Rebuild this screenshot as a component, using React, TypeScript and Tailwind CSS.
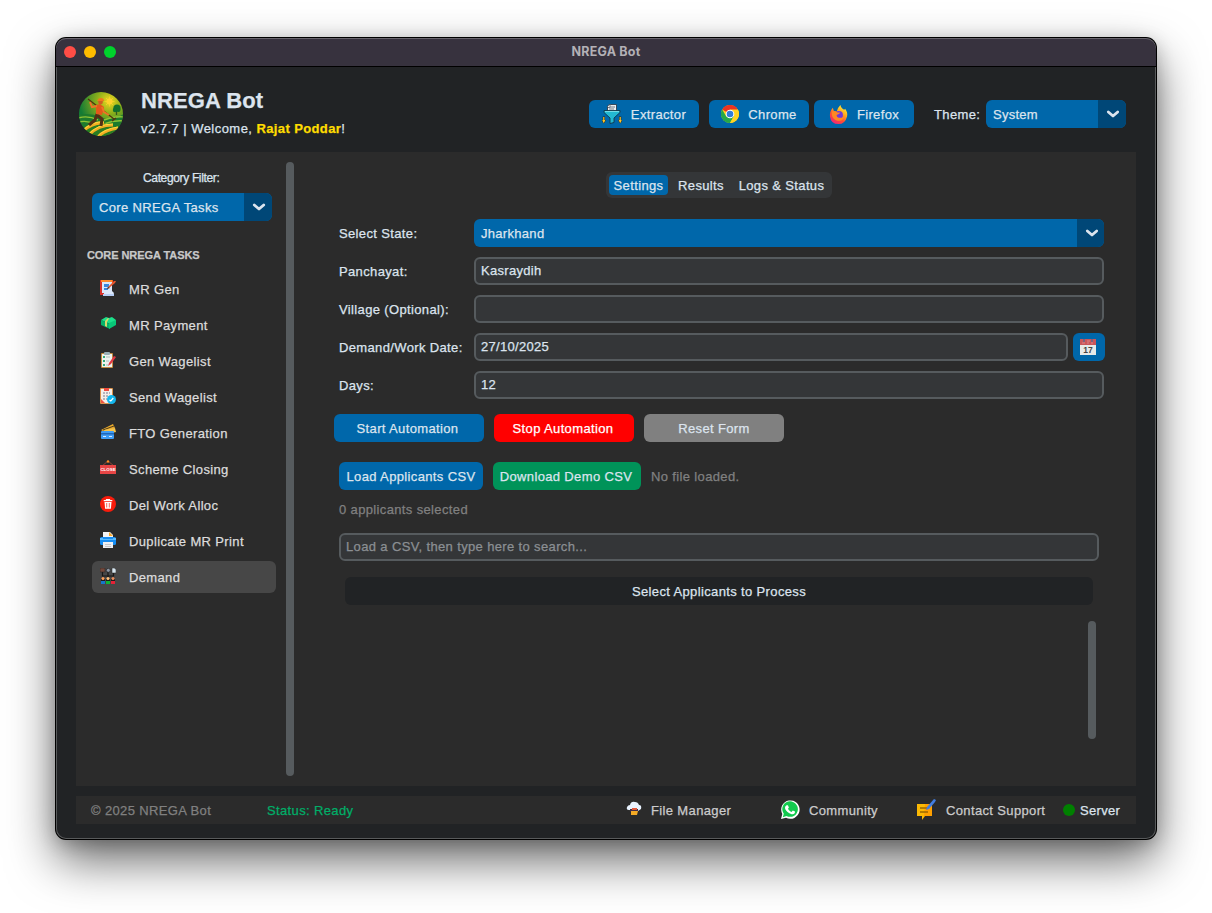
import React from 'react';

function Chevron() {
  return (
    <svg className="ml-0.5" width="14" height="10" viewBox="0 0 14 10" fill="none" stroke="#dce4ee" strokeWidth="2.8" strokeLinecap="round" strokeLinejoin="round">
      <path d="M2.3 3L7 7l4.7-4" />
    </svg>
  );
}

function Select({ label, className, arrow, tracking }: { label: string; className: string; arrow: string; tracking: string }) {
  return (
    <div className={`flex h-7 shrink-0 overflow-hidden rounded-md bg-[#0067aa] ${className}`}>
      <span className={`flex-1 pl-[7px] leading-[29px] ${tracking}`}>{label}</span>
      <span className={`flex items-center justify-center bg-[#004777] ${arrow}`}>
        <Chevron />
      </span>
    </div>
  );
}

const I = {
  gen: (
    <>
      <path d="M0 0h13v3L4 15H0z" fill="#f4511e" />
      <path d="M0 0h4v15H0z" fill="#d6302a" /><path d="M1 0h11v2H1z" fill="#ff8a2b" />
      <path d="M2 2h10v9l2 2-1 3H4V13H2z" fill="#dbe7fa" />
      <path d="M4 4h5v3H4zM4 8h4v2H4z" fill="#3b87dd" /><path d="M3 14h11v2H3z" fill="#b6cdf5" />
      <path d="M7 9l1-2 6-6 2 0-1 2-6 5z" fill="#e6552d" /><path d="M7 9l1-2 2 1z" fill="#333" />
    </>
  ),
  pay: (
    <>
      <path d="M1 4l5-3 3 1 3-1 4 3v1l-6 3z" fill="#1be08a" /><path d="M1 4l9 4v5L1 9z" fill="#06b46a" />
      <path d="M9 7l7-3v5l-7 4z" fill="#08c777" /><path d="M5 5l3-3 1 .5L7 6v5l-2-1z" fill="#d8d86c" />
    </>
  ),
  list: (
    <>
      <rect x="1" y="1" width="12" height="15" rx="1" fill="#c58b42" /><rect x="2" y="2" width="10" height="13" fill="#edf3ef" />
      <rect x="4" y="0" width="6" height="3" rx="1" fill="#9aafb5" />
      <path d="M3 4h2v2H3zM3 8h2v2H3zM3 12h2v2H3z" fill="#36a878" /><path d="M6 5h4M6 9h3M6 13h2" stroke="#aebdba" />
      <path d="M8 14l1-3 5-7 2 1-5 7z" fill="#df3944" />
    </>
  ),
  send: (
    <>
      <rect x="0" width="13" height="16" rx="1" fill="#d9924a" /><rect x="1" y="1" width="11" height="14" fill="#f5eee8" />
      <path d="M4 0h5v3H4z" fill="#ef4c3f" /><path d="M3 5h7M3 8h6M3 11h4" stroke="#777d91" strokeDasharray="2 1" />
      <path d="M1 11l4 4H1z" fill="#ee5342" /><circle cx="11.5" cy="11.5" r="4.5" fill="#12b6ee" />
      <path d="M9.5 12l1.3 1 2.5-3" fill="none" stroke="#fff" strokeWidth="1.2" />
    </>
  ),
  fto: (
    <>
      <path d="M1 6l12-6 2 4-9 5z" fill="#e7a92d" /><path d="M3 6l11-4" stroke="#4a3a1e" />
      <path d="M4 6l11-2 1 4-9 2z" fill="#f6c44c" /><rect x="1" y="7" width="13" height="8" rx="1" fill="#3e9cf5" />
      <path d="M1 9h13v1.5H1z" fill="#2166b6" /><path d="M3 12.5h3M9 12.5h3" stroke="#d2e8ff" />
    </>
  ),
  close: (
    <>
      <path d="M2 6l6-5 6 5" fill="none" stroke="#8d4436" /><circle cx="8" cy="1.5" r="1.2" fill="#ff8b23" />
      <rect y="5" width="16" height="9" fill="#e74545" />
      <text x="8" y="11.2" textAnchor="middle" fontFamily="Liberation Sans" fontWeight="bold" fontSize="4.4" fill="#fff">CLOSE</text>
    </>
  ),
  del: (
    <>
      <circle cx="8" cy="8" r="8" fill="#f81c0c" /><path d="M3.7 4.7h8.6M6.5 4.5v-1h3v1" fill="none" stroke="#fff" strokeWidth="1.2" />
      <path d="M4.5 6h7l-.6 6.8H5.1z" fill="#fff" /><path d="M6.7 7v4.5M9.3 7v4.5" stroke="#f81c0c" strokeWidth=".7" />
    </>
  ),
  print: (
    <>
      <path d="M3 0h7l3 3v4H3z" fill="#f3f4f5" /><path d="M9 0l4 4H9z" fill="#f6a62b" />
      <rect y="5" width="16" height="8" rx="1.5" fill="#168cf1" /><path d="M0 6h3v1h10V6h3v2H0z" fill="#57baff" />
      <path d="M3 10h10v6H3z" fill="#eef0f4" /><path d="M5 12.5h6M5 14.5h6" stroke="#c5c7cb" />
    </>
  ),
  demand: (
    <>
      <path d="M2.5 4v4h11V4M8 4v5" fill="none" stroke="#171717" strokeWidth="1.2" />
      <rect y="0" width="5" height="4" fill="#74483b" stroke="#222" strokeWidth=".5" /><circle cx="8.3" cy="2.3" r="2" fill="#8d98a6" stroke="#222" strokeWidth=".7" /><path d="M12 0h2.5L16 1.5V5h-4z" fill="#d7e6ef" stroke="#222" strokeWidth=".5" />
      <path d="M1 11h4v5H1zM6 11h4v5H6zM11 11h4v5h-4z" fill="#1b1b1b" />
      <circle cx="3" cy="10.5" r="1.5" fill="#ff9d56" /><circle cx="8" cy="10.5" r="1.5" fill="#ffc27b" /><circle cx="13" cy="10.5" r="1.5" fill="#e98a58" />
      <path d="M1 13h4v3H1z" fill="#1575ca" /><path d="M6 13h4v3H6z" fill="#10b333" /><path d="M11 13h4v3h-4z" fill="#e62136" />
    </>
  ),
};

const tasks = [
  { name: 'MR Gen', icon: I.gen },
  { name: 'MR Payment', icon: I.pay },
  { name: 'Gen Wagelist', icon: I.list },
  { name: 'Send Wagelist', icon: I.send },
  { name: 'FTO Generation', icon: I.fto },
  { name: 'Scheme Closing', icon: I.close },
  { name: 'Del Work Alloc', icon: I.del },
  { name: 'Duplicate MR Print', icon: I.print },
  { name: 'Demand', icon: I.demand },
];

function Logo() {
  return (
    <svg className="size-[46px]" viewBox="0 0 46 46">
      <defs>
        <radialGradient id="sky" cx=".68" cy=".22" r=".65"><stop stopColor="#f4d820" /><stop offset=".4" stopColor="#8fb01a" /><stop offset="1" stopColor="#137b35" /></radialGradient>
        <clipPath id="disc"><circle cx="23" cy="23" r="22" /></clipPath>
      </defs>
      <g clipPath="url(#disc)">
        <path d="M0 0h46v46H0z" fill="url(#sky)" />
        <circle cx="31.500" cy="10.500" r="3" fill="#ffd22b" />
        <path d="M31.500 5.500v10M26.500 10.500h10M28 7l7 7M35 7l-7 7" stroke="#ffd22b" strokeWidth=".7" />
        <path d="M0 24q12-3 22 2t24-3v23H0z" fill="#1d7a2d" />
        <path d="M0 27q10-3 20 2M26 29q10-4 20-3M0 31q10-2 16 2M26 33q10-4 20-3" fill="none" stroke="#8fc336" strokeWidth="1.4" />
        <path d="M3 40Q17 28 32 34q8 3 14-1v13H0z" fill="#2a7d22" />
        <path d="M5 40Q15 31 26 32M10 45Q19 34 35 34M20 46q6-7 20-9M31 46q5-4 13-6" fill="none" stroke="#f2ae22" strokeWidth="3.2" />
        <path d="M5 39Q15 30 26 31M10 44Q19 33 35 33M20 45q6-7 20-9" fill="none" stroke="#ffd93c" strokeWidth="1" />
      </g>
      <path d="M38.500 17v7" stroke="#315521" strokeWidth="1.3" /><circle cx="39" cy="17" r="3.600" fill="#14702b" /><circle cx="37" cy="19" r="2.200" fill="#14702b" /><circle cx="40.500" cy="19" r="2" fill="#14702b" />
      <path d="M10 8l26 20m-2 2l4-3" stroke="#54300f" strokeWidth="1.2" fill="none" />
      <path d="M19 23l-2 6-6 5m8-10l5 4-1 7" fill="none" stroke="#523015" strokeWidth="3" strokeLinejoin="round" />
      <path d="M18 14l4-1 4 3-2 8-6-1z" fill="#e2581a" /><path d="M19 15l-5 1-2-5m12 5l2 5 5 3" fill="none" stroke="#ed7326" strokeWidth="2" />
      <circle cx="22.500" cy="11" r="2.400" fill="#ce5e25" /><path d="M19 10q1-3 4-3t3 3z" fill="#ee791e" />
    </svg>
  );
}

const ExtractorIcon = () => (
  <svg className="h-5 w-5" viewBox="0 0 20 20">
    <path d="M7 .5h7.500v8h-9V2.500z" fill="#edf0f2" stroke="#27313d" strokeWidth=".8" /><path d="M8 .5v3H6M7 5h5M8 3h5" fill="none" stroke="#727c88" />
    <path d="M2 6.500h16v2L12 14v4.500l-4 1V14L2 8.500z" fill="#22b8d2" stroke="#123648" strokeWidth=".9" /><path d="M3 7.500h14" stroke="#72dbe7" />
    <path d="M1.800 12.500v6M18.200 12.500v6" stroke="#302b1a" strokeWidth="2.200" /><path d="M-.5 16l2.300 3.500L4 16M16 16l2.200 3.500L20.500 16" fill="#302b1a" />
    <path d="M1.800 13v5m-1-2l1 2 1-2M18.200 13v5m-1-2l1 2 1-2" fill="none" stroke="#ffc629" strokeWidth="1.200" />
  </svg>
);

const ChromeIcon = () => (
  <svg className="h-[18px] w-[18px]" viewBox="0 0 20 20">
    <circle cx="10" cy="10" r="10" fill="#ffd321" />
    <path d="M10 10L1.3 5A10 10 0 0 1 18.700 5z" fill="#eb3323" /><path d="M1.300 5A10 10 0 0 0 10 20l4.400-7.700L10 10 6 13z" fill="#25a84a" />
    <path d="M10 5h8.700A10 10 0 0 1 10 20l4.400-7.500z" fill="#ffd321" /><circle cx="10" cy="10" r="4.800" fill="#fff" /><circle cx="10" cy="10" r="3.700" fill="#327dd8" />
  </svg>
);

const FirefoxIcon = () => (
  <svg className="h-[19px] w-[19px]" viewBox="0 0 20 20">
    <defs><linearGradient id="flame" x1=".8" y1="0" x2=".2" y2="1"><stop stopColor="#fff23b" /><stop offset=".35" stopColor="#ffad1d" /><stop offset=".65" stopColor="#ff4c35" /><stop offset="1" stopColor="#ed247d" /></linearGradient></defs>
    <path d="M12 0q1 4 4 5l1-1q3 4 2 8-2 8-9 8-8 0-9-8-.5-5 3-9l1 3 3 1q1-4 4-7z" fill="url(#flame)" />
    <circle cx="10.500" cy="10.500" r="4.200" fill="#7138da" /><path d="M3 7q4-2 6 1h3q-1 2-4 2.500 0 3 4 3 3 0 4-3 0 7-7 6-5-1-6-6z" fill="#ff8923" />
  </svg>
);

function Field({ label, value, date }: { label: string; value: string; date?: boolean }) {
  return (
    <div className="flex h-7">
      <span className="w-[135px] shrink-0 leading-[29px]">{label}</span>
      <div className={`h-7 rounded-md border-2 border-[#565b5e] bg-[#343638] pl-[5px] leading-[23px] tracking-[0.3px] ${date ? 'w-[594px]' : 'w-[630px]'}`}>{value}</div>
      {date && (
        <button className="ml-[5px] flex h-7 w-8 items-center justify-center rounded-md bg-[#0067aa] pr-0.5">
          <svg className="size-4" viewBox="0 0 16 16">
            <path d="M0 0h16v16H0z" fill="#e8e9e8" /><path d="M0 0h16v6H0z" fill="#cb555a" />
            <path d="M4 0v3M12 0v3" stroke="#486a95" strokeWidth="1.2" /><path d="M2 4h3M7 2h3M7 4h2M11 4h2" stroke="#d98489" />
            <text x="8" y="14" textAnchor="middle" fontFamily="Liberation Sans" fontWeight="bold" fontSize="8.500" letterSpacing="0" fill="#444">17</text>
          </svg>
        </button>
      )}
    </div>
  );
}

const btn = 'flex h-7 shrink-0 items-center justify-center rounded-md leading-[20px]';

export default function App() {
  return (
    <div className="h-[913px] w-[1212px] overflow-hidden bg-white pt-[38px] pl-14 font-['Liberation_Sans',sans-serif] text-[13px] text-[#dce4ee]">
      <div className="flex h-[801px] w-[1100px] flex-col overflow-hidden rounded-[10px] bg-[#212325] shadow-[0_0_0_1px_#000,0_21px_48px_rgba(0,0,0,0.6),0_4px_18px_rgba(0,0,0,0.22)] ring-1 ring-inset ring-white/25">
        <div className="grid h-[29px] shrink-0 grid-cols-3 items-center rounded-t-[10px] border-b border-black bg-[#37323e] shadow-[inset_0_1px_0_#68646c]">
          <div className="flex gap-2 pl-2">
            <i className="size-3 rounded-full bg-[#ff4d46]" /><i className="size-3 rounded-full bg-[#ffbc00]" /><i className="size-3 rounded-full bg-[#00d22c]" />
          </div>
          <div className="text-center font-['Inter',sans-serif] text-[12.5px] font-bold tracking-[0.2px] text-[#b3b1b6]">NREGA Bot</div>
        </div>

        <div className="flex flex-1 flex-col tracking-[0.36px] [-webkit-text-stroke:0.25px_currentColor]">
          <header className="flex h-[85px] shrink-0 items-start pl-[22px]">
            <div className="pt-6"><Logo /></div>
            <div className="ml-[17px] w-[448px] pt-5">
              <h1 className="text-[22px] leading-[27px] font-bold tracking-[0.1px]">NREGA Bot</h1>
              <p className="mt-1.5 leading-[18px] whitespace-nowrap"><span className="tracking-[0.46px]">v2.7.7 | Welcome, </span><b className="tracking-[0.38px] text-[#ffdd00]">Rajat Poddar</b>!</p>
            </div>
            <div className="flex items-center pt-[33px]">
              <button className={`${btn} w-[110px] gap-[9px] bg-[#0067aa]`}><ExtractorIcon /><span className="mt-0.5">Extractor</span></button>
              <button className={`${btn} ml-2.5 w-[100px] gap-[9px] bg-[#0067aa]`}><ChromeIcon /><span className="mt-0.5">Chrome</span></button>
              <button className={`${btn} ml-[5px] w-[100px] gap-[9px] bg-[#0067aa]`}><FirefoxIcon /><span className="mt-0.5">Firefox</span></button>
              <span className="ml-5 w-[52px] pt-px">Theme:</span>
              <Select label="System" className="w-[140px]" arrow="w-7" tracking="tracking-[0.25px]" />
            </div>
          </header>

          <main className="mx-5 flex h-[634px] shrink-0 bg-[#2b2b2b]">
            <aside className="w-[210px] pt-4">
              <div className="pl-[67px] text-[12px] leading-[20px] tracking-[-0.35px]">Category Filter:</div>
              <Select label="Core NREGA Tasks" className="mt-[5px] ml-4 w-[180px]" arrow="w-7" tracking="" />
              <h2 className="mt-[25px] ml-[11px] text-[11px] leading-[18px] font-bold tracking-[-0.07px] text-[#c8c8c8]">CORE NREGA TASKS</h2>
              <nav className="mt-[9px] ml-4 flex w-[184px] flex-col gap-1">
                {tasks.map((task) => (
                  <div key={task.name} className={`flex h-8 items-center gap-[13px] rounded-md pl-2 text-[#dcdcdc] ${task.name === 'Demand' ? 'bg-[#474747]' : ''}`}>
                    <svg className="-mt-0.5 size-4 tracking-normal" viewBox="0 0 16 16">{task.icon}</svg>
                    <span className="pt-px leading-[21px]">{task.name}</span>
                  </div>
                ))}
              </nav>
            </aside>
            <div className="mt-2.5 h-[614px] w-2 rounded-full bg-[#565b5e]" />

            <section className="flex-1 pt-5">
              <div className="ml-[312px] flex h-[26px] w-[226px] items-center rounded-md bg-[#343638] px-[3px] leading-[21px] whitespace-nowrap">
                <span className="h-5 w-[59px] rounded bg-[#0067aa] text-center">Settings</span>
                <span className="h-5 w-[66px] text-center">Results</span>
                <span className="h-5 w-[95px] text-center">Logs &amp; Status</span>
              </div>
              <div className="mt-[21px] ml-[45px] flex flex-col gap-2.5">
                <div className="flex h-7">
                  <span className="w-[135px] leading-[29px]">Select State:</span>
                  <Select label="Jharkhand" className="w-[630px]" arrow="w-[27px]" tracking="tracking-[0.3px]" />
                </div>
                <Field label="Panchayat:" value="Kasraydih" />
                <Field label="Village (Optional):" value="" />
                <Field label="Demand/Work Date:" value="27/10/2025" date />
                <Field label="Days:" value="12" />
              </div>
              <div className="mt-[15px] ml-10 flex gap-2.5">
                <button className={`${btn} w-[150px] bg-[#0067aa] pt-0.5 pr-[3px]`}>Start Automation</button>
                <button className={`${btn} w-[140px] bg-[#ff0000] pt-0.5 pr-0.5 text-white`}>Stop Automation</button>
                <button className={`${btn} w-[140px] bg-[#808080] pt-0.5`}>Reset Form</button>
              </div>
              <div className="mt-5 ml-[45px] flex gap-2.5">
                <button className={`${btn} w-[144px] bg-[#0067aa] pt-0.5`}>Load Applicants CSV</button>
                <button className={`${btn} w-[148px] bg-[#009359] pt-0.5 pr-0.5`}>Download Demo CSV</button>
                <span className="leading-[29px] text-[#808080]">No file loaded.</span>
              </div>
              <p className="mt-[9px] ml-[45px] leading-5 text-[#808080]">0 applicants selected</p>
              <div className="mt-[13px] ml-[45px] h-7 w-[760px] rounded-md border-2 border-[#565b5e] bg-[#343638] pl-[5px] leading-[23px] text-[#8b8f93]">Load a CSV, then type here to search...</div>
              <div className="mt-4 ml-[51px] h-7 w-[748px] rounded-md bg-[#212325] text-center leading-[29px]">Select Applicants to Process</div>
              <div className="mt-4 ml-[794px] h-[118px] w-2 rounded-full bg-[#565b5e]" />
            </section>
          </main>

          <footer className="mx-5 mt-2.5 flex h-7 shrink-0 items-center bg-[#2b2b2b] pl-[15px] leading-[20px] text-[#cccccc]">
            <span className="w-[176px] pt-0.5 text-[#808080]">© 2025 NREGA Bot</span>
            <span className="w-[359px] pt-0.5 text-[#00ae68]">Status: Ready</span>
            <span className="flex w-[154px] items-center gap-[9px]">
              <svg className="-mt-0.5 size-4" viewBox="0 0 16 16"><path d="M3 9Q0 9 1 6q1-2 3-2Q5 0 9 1q3 0 4 3 3 0 2 4l-3 2z" fill="#e9f3ff" /><path d="M4 8h8v3H4z" fill="#452c43" /><path d="M5 10h7l-1 4H5z" fill="#f4aa25" /><path d="M6 8h5" stroke="#df5a3f" strokeWidth="2" /></svg>
              <span className="pt-0.5">File Manager</span>
            </span>
            <span className="flex w-[136px] items-center gap-[9px]">
              <svg className="size-5" viewBox="0 0 20 20"><path d="M1 19l1.300-5A9.200 9.200 0 1 1 6 17.700z" fill="#fff" /><path d="M2.800 17.200l1-3.500A7.800 7.800 0 1 1 6.500 16z" fill="#12c94e" /><path d="M6.500 5.300l1.400-.1 1 2.300-.9 1.200c1 1.800 2 2.600 3.600 3.200l1.200-1.400 2.200 1.100c.2 3-2.300 3.200-4.500 2.200-2.800-1.200-6.500-4.700-5.200-7.400z" fill="#fff" /></svg>
              <span className="pt-0.5">Community</span>
            </span>
            <span className="flex w-[147px] items-center gap-2.5">
              <svg className="size-5 overflow-visible" viewBox="0 0 20 20"><path d="M1 4h15v12H9l-3 4v-4H1z" fill="#fbb904" /><path d="M9 4h7v12H8z" fill="#ffa000" /><path d="M4 8h7M4 12h8" stroke="#9a6700" strokeWidth="1.300" /><path d="M10 10l1-3 7-8 2 1-1 2-6 7z" fill="#427de0" /></svg>
              <span className="pt-0.5">Contact Support</span>
            </span>
            <span className="flex items-center gap-[5px] tracking-[0.3px] text-[#dce4ee]"><i className="size-3 rounded-full bg-[#008000]" /><span className="pt-0.5">Server</span></span>
          </footer>
        </div>
      </div>
    </div>
  );
}
